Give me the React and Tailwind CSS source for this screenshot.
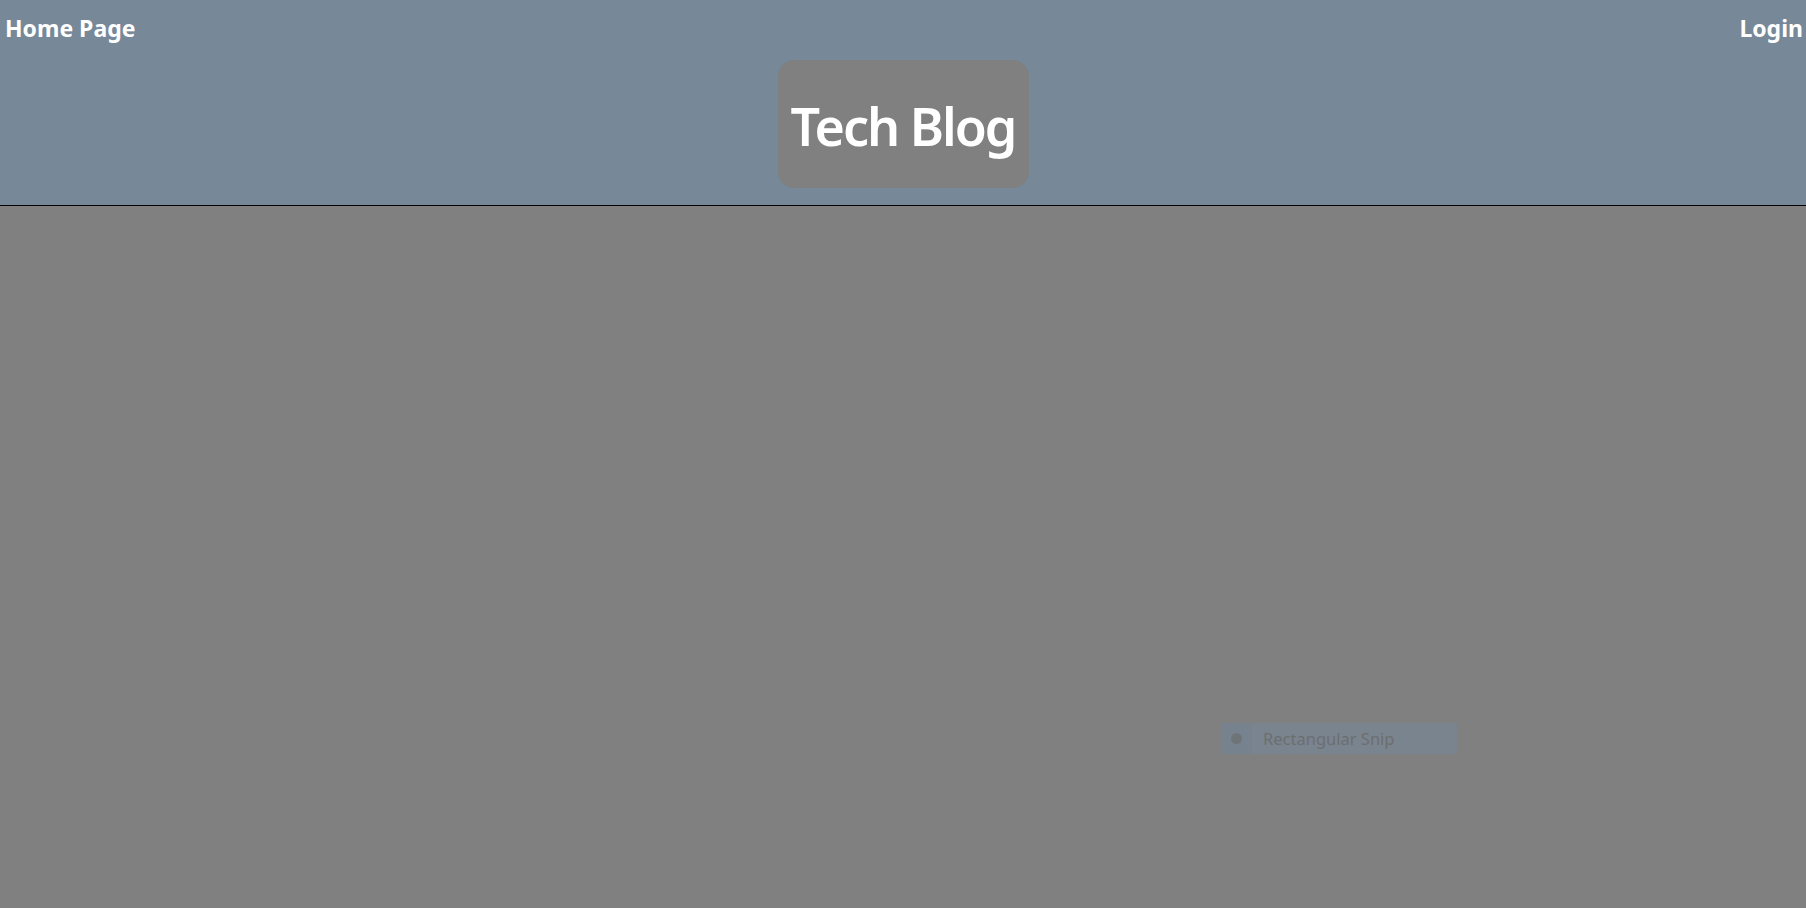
export default function App() {
  return (
    <div className="relative min-h-screen bg-[#808080]" style={{ fontFamily: '"Noto Sans", sans-serif' }}>
      {/* Header */}
      <header className="h-[206px] bg-[#778899] border-b border-black flex flex-col">
        <nav className="flex justify-between pl-[5px] pr-[3px] pt-[12px]">
          <a className="text-white font-bold text-[23px] leading-[32px]">Home Page</a>
          <a className="text-white font-bold text-[23px] leading-[32px]">Login</a>
        </nav>
        <div className="flex justify-center mt-[16px]">
          <div className="w-[251px] h-[128px] pt-[3px] rounded-[16px] bg-[#808080] flex items-center justify-center">
            <h1 className="text-white font-semibold text-[52px] leading-[52px] tracking-[-2px]">Tech Blog</h1>
          </div>
        </div>
      </header>

      {/* Snip tooltip overlay */}
      <div className="absolute left-[1221px] top-[723px] w-[236px] h-[31px] flex bg-[#7a848e]">
        <div className="w-[31px] h-full bg-[#76828e] flex items-center justify-center">
          <span className="w-[11px] h-[11px] rounded-full bg-[#6f7479]" />
        </div>
        <span className="pl-[11px] text-[16.5px] leading-[31px] text-[#6d6e70]">Rectangular Snip</span>
      </div>
    </div>
  );
}
